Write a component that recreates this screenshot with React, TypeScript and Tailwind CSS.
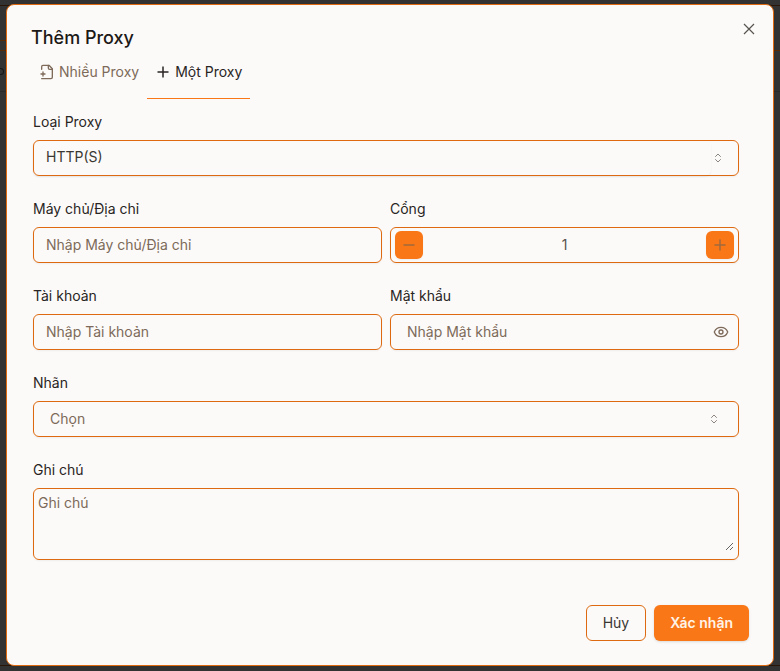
import { useState } from 'react';
import type { ReactNode } from 'react';
import { ChevronsUpDown, Eye } from 'lucide-react';

// ---------------------------------------------------------------------------
// Shared styles
// ---------------------------------------------------------------------------

const frame = 'w-full rounded-md border border-[#dd6a10] shadow-xs';

const control =
  'bg-transparent text-sm text-[#3a3733] outline-none placeholder:text-[#7d6a5a] placeholder:opacity-100';

const chevrons = 'pointer-events-none absolute top-3 text-[#8a8580]';

// ---------------------------------------------------------------------------
// Icons
// ---------------------------------------------------------------------------

function LineIcon({ d, stroke }: { d: string; stroke: number }) {
  return (
    <svg
      width="16"
      height="16"
      viewBox="0 0 16 16"
      fill="none"
      stroke="currentColor"
      strokeWidth={stroke}
      aria-hidden="true"
    >
      <path d={d} />
    </svg>
  );
}

function FileAddIcon() {
  return (
    <svg
      width="16"
      height="16"
      viewBox="0 0 24 24"
      fill="none"
      stroke="currentColor"
      strokeWidth="2"
      strokeLinecap="round"
      strokeLinejoin="round"
      aria-hidden="true"
    >
      <path d="M4 22h14a2 2 0 0 0 2-2V7l-5-5H6a2 2 0 0 0-2 2v4" />
      <path d="M14 2v4a2 2 0 0 0 2 2h4" />
      <path d="M3 15h6" />
      <path d="M6 12v6" />
    </svg>
  );
}

const plusPath = 'M2.5 8h11M8 2.5v11';
const minusPath = 'M2.5 8h11';
const closePath = 'M3 3l10 10M13 3L3 13';

// ---------------------------------------------------------------------------
// Field: label above its control
// ---------------------------------------------------------------------------

interface FieldProps {
  id: string;
  label: string;
  children: ReactNode;
}

function Field({ id, label, children }: FieldProps) {
  return (
    <div className="flex min-w-0 flex-col gap-2">
      <label htmlFor={id} className="text-sm leading-5 text-[#292524]">
        {label}
      </label>
      {children}
    </div>
  );
}

// ---------------------------------------------------------------------------
// Page behind the dialog, dimmed by the overlay
// ---------------------------------------------------------------------------

function Backdrop() {
  return (
    <div
      aria-hidden="true"
      className="absolute inset-0 flex flex-col overflow-hidden bg-[#323232]"
    >
      <div className="h-1.5 border-b border-[#2a1608]" />
      <div className="h-[35px] w-10 border-b border-[#582a06]" />
      <div className="h-2.5 border-b border-[#582a06]" />
      <div className="flex h-[41px] items-center border-b border-[#292929]">
        <span className="h-[7px] w-1 rounded-r-sm border border-l-0 border-[#161616]" />
      </div>
      <div className="grow border-b border-[#2a1608]" />
      <div className="h-[5px]" />
    </div>
  );
}

// ---------------------------------------------------------------------------
// Port stepper
// ---------------------------------------------------------------------------

const stepButton =
  'flex h-7 w-7 shrink-0 items-center justify-center rounded-md bg-[#f97716] text-[#a06a3c] shadow-xs';

function PortInput({ id }: { id: string }) {
  const [port, setPort] = useState('1');
  const step = (by: number) => setPort(String(Math.max(1, (Number(port) || 1) + by)));

  return (
    <div className={`${frame} flex h-9 items-center px-1`}>
      <button type="button" aria-label="Giảm" className={stepButton} onClick={() => step(-1)}>
        <LineIcon d={minusPath} stroke={1.5} />
      </button>
      <input
        id={id}
        inputMode="numeric"
        value={port}
        onChange={(e) => setPort(e.target.value)}
        className="min-w-0 grow bg-transparent text-center text-sm text-[#57534e] outline-none"
      />
      <button type="button" aria-label="Tăng" className={stepButton} onClick={() => step(1)}>
        <LineIcon d={plusPath} stroke={1.5} />
      </button>
    </div>
  );
}

// ---------------------------------------------------------------------------
// Dialog
// ---------------------------------------------------------------------------

function App() {
  const [showPassword, setShowPassword] = useState(false);

  return (
    <div className="relative flex min-h-screen items-center justify-center pb-px font-['Inter',sans-serif]">
      <Backdrop />

      <div
        role="dialog"
        aria-labelledby="dialog-title"
        className="relative flex w-full max-w-3xl flex-col rounded-lg border border-[#dd6a10] bg-[#fcfaf8] p-6"
      >
        <button
          type="button"
          aria-label="Đóng"
          className="absolute top-4 right-4 text-[#57534e]"
        >
          <LineIcon d={closePath} stroke={1.2} />
        </button>

        <h2 id="dialog-title" className="text-lg leading-[18px] font-medium text-[#1c1917]">
          Thêm Proxy
        </h2>

        {/* Tabs */}
        <div role="tablist" className="mt-[7px] flex text-sm">
          <button
            type="button"
            role="tab"
            aria-selected="false"
            className="flex h-[45px] items-start gap-1 px-2 pt-2 text-[#7d6a5a]"
          >
            <span className="pt-0.5">
              <FileAddIcon />
            </span>
            Nhiều Proxy
          </button>
          <button
            type="button"
            role="tab"
            aria-selected="true"
            className="flex h-[45px] items-start gap-1 border-b border-[#f97716] px-2 pt-2 text-[#292524]"
          >
            <span className="pt-0.5">
              <LineIcon d={plusPath} stroke={1.5} />
            </span>
            Một Proxy
          </button>
        </div>

        {/* Fields */}
        <form className="mt-[13px] flex flex-col gap-[23px] pr-2.5 pl-0.5">
          <Field id="type" label="Loại Proxy">
            <div className="relative">
              <select
                id="type"
                className={`${frame} ${control} block h-9 appearance-none px-3 pb-0.5`}
              >
                <option>HTTP(S)</option>
                <option>SOCKS5</option>
              </select>
              <span className="pointer-events-none absolute inset-y-0 right-7 left-0 rounded-md shadow-xs" />
              <ChevronsUpDown size={12} strokeWidth={2} className={`${chevrons} right-[15px]`} />
            </div>
          </Field>

          <div className="grid grid-cols-2 gap-x-2 gap-y-[23px]">
            <Field id="host" label="Máy chủ/Địa chỉ">
              <input
                id="host"
                placeholder="Nhập Máy chủ/Địa chỉ"
                className={`${frame} ${control} h-9 px-3 pb-0.5`}
              />
            </Field>
            <Field id="port" label="Cổng">
              <PortInput id="port" />
            </Field>
            <Field id="user" label="Tài khoản">
              <input
                id="user"
                placeholder="Nhập Tài khoản"
                className={`${frame} ${control} h-9 px-3 pb-0.5`}
              />
            </Field>
            <Field id="password" label="Mật khẩu">
              <div className="relative">
                <input
                  id="password"
                  type={showPassword ? 'text' : 'password'}
                  placeholder="Nhập Mật khẩu"
                  className={`${frame} ${control} block h-9 pr-10 pb-0.5 pl-4`}
                />
                <button
                  type="button"
                  aria-label="Hiện mật khẩu"
                  className="absolute top-2.5 right-2.5 text-[#7d6a5a]"
                  onClick={() => setShowPassword(!showPassword)}
                >
                  <Eye size={16} />
                </button>
              </div>
            </Field>
          </div>

          <Field id="label" label="Nhãn">
            <div className="relative">
              <select
                id="label"
                className={`${frame} block h-9 appearance-none bg-transparent px-4 text-sm text-[#7d6a5a] outline-none`}
              >
                <option>Chọn</option>
              </select>
              <ChevronsUpDown size={12} strokeWidth={2} className={`${chevrons} right-[19px]`} />
            </div>
          </Field>

          <Field id="note" label="Ghi chú">
            <div className={`${frame} px-1 pt-1 pb-2`}>
              <textarea
                id="note"
                placeholder="Ghi chú"
                className={`${control} block h-[58px] w-full resize`}
              />
            </div>
          </Field>
        </form>

        {/* Footer */}
        <div className="mt-[45px] flex justify-end gap-2 text-sm">
          <button
            type="button"
            className="h-9 rounded-md border border-[#dd6a10] px-4 text-[#3a3733]"
          >
            Hủy
          </button>
          <button
            type="button"
            className="h-9 rounded-md bg-[#f97716] px-4 font-semibold text-[#fff3e8] shadow-sm"
          >
            Xác nhận
          </button>
        </div>
      </div>
    </div>
  );
}

export default App;
